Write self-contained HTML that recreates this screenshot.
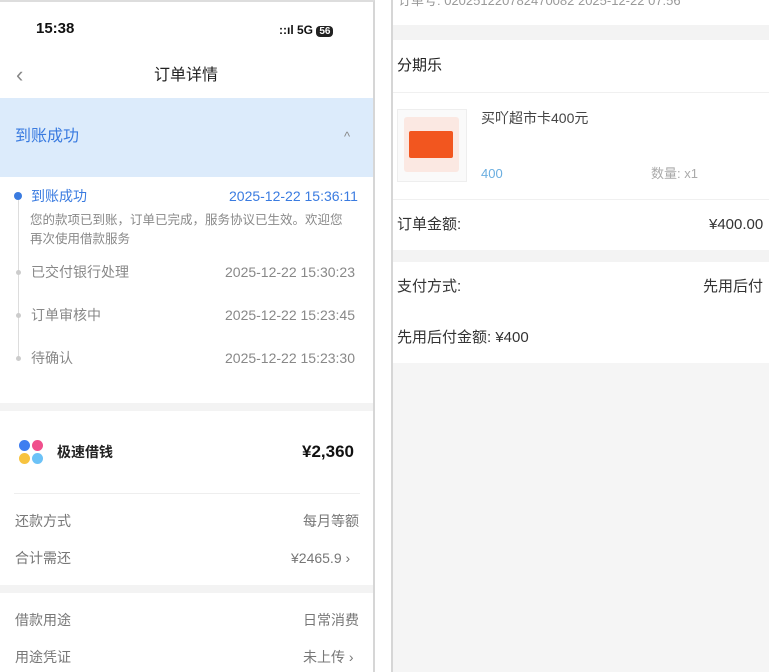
<!DOCTYPE html>
<html><head><meta charset="utf-8"><style>
*{margin:0;padding:0;box-sizing:border-box}
body{width:769px;height:672px;background:#fff;font-family:"Liberation Sans","Noto Sans CJK SC",sans-serif;position:relative;overflow:hidden;color:#333}
.a{position:absolute;white-space:nowrap;line-height:20px}
</style></head><body>
<div class="a" style="left:0;top:0;width:375px;height:672px;border-right:2px solid #d6d6d6;border-top:2px solid #ddd;background:#fff"></div>
<div class="a" style="left:36px;top:19px;font-size:15px;font-weight:bold;color:#111">15:38</div>
<div class="a" style="left:279px;top:20px;font-size:12px;font-weight:bold;color:#111">::ıl 5G <span style="background:#222;color:#fff;border-radius:4px;padding:0 3px;font-size:10px">56</span></div>
<div class="a" style="left:16px;top:65px;font-size:22px;color:#888">‹</div>
<div class="a" style="left:154px;top:66px;font-size:16px;color:#222">订单详情</div>
<div class="a" style="left:0;top:98px;width:373px;height:79px;background:#dcebfb"></div>
<div class="a" style="left:15px;top:127px;font-size:16px;color:#3a7be0">到账成功</div>
<div class="a" style="left:344px;top:127px;font-size:13px;color:#888">^</div>
<div class="a" style="left:18px;top:200px;width:1px;height:160px;background:#ddd"></div>
<div class="a" style="left:14px;top:192px;width:8px;height:8px;border-radius:50%;background:#3a7be0"></div>
<div class="a" style="left:31px;top:186px;font-size:14px;color:#3a7be0">到账成功</div>
<div class="a" style="left:229px;top:186px;font-size:14px;color:#3a7be0">2025-12-22 15:36:11</div>
<div class="a" style="left:30px;top:211px;font-size:12.5px;color:#888;line-height:19px">您的款项已到账，订单已完成，服务协议已生效。欢迎您<br>再次使用借款服务</div>
<div class="a" style="left:16px;top:270px;width:5px;height:5px;border-radius:50%;background:#ccc"></div>
<div class="a" style="left:31px;top:262px;font-size:14px;color:#888">已交付银行处理</div>
<div class="a" style="left:225px;top:262px;font-size:14px;color:#888">2025-12-22 15:30:23</div>
<div class="a" style="left:16px;top:313px;width:5px;height:5px;border-radius:50%;background:#ccc"></div>
<div class="a" style="left:31px;top:305px;font-size:14px;color:#888">订单审核中</div>
<div class="a" style="left:225px;top:305px;font-size:14px;color:#888">2025-12-22 15:23:45</div>
<div class="a" style="left:16px;top:356px;width:5px;height:5px;border-radius:50%;background:#ccc"></div>
<div class="a" style="left:31px;top:348px;font-size:14px;color:#888">待确认</div>
<div class="a" style="left:225px;top:348px;font-size:14px;color:#888">2025-12-22 15:23:30</div>
<div class="a" style="left:0;top:403px;width:373px;height:8px;background:#f3f3f3"></div>
<div class="a" style="left:19px;top:440px;width:11px;height:11px;border-radius:50%;background:#3f7ef0"></div>
<div class="a" style="left:32px;top:440px;width:11px;height:11px;border-radius:50%;background:#f04f8c"></div>
<div class="a" style="left:19px;top:453px;width:11px;height:11px;border-radius:50%;background:#f7c340"></div>
<div class="a" style="left:32px;top:453px;width:11px;height:11px;border-radius:50%;background:#6cc2f7"></div>
<div class="a" style="left:57px;top:442px;font-size:14px;font-weight:bold;color:#222">极速借钱</div>
<div class="a" style="left:302px;top:442px;font-size:17px;font-weight:bold;color:#111">¥2,360</div>
<div class="a" style="left:14px;top:493px;width:346px;height:1px;background:#eee"></div>
<div class="a" style="left:15px;top:511px;font-size:14px;color:#777">还款方式</div>
<div class="a" style="left:303px;top:511px;font-size:14px;color:#777">每月等额</div>
<div class="a" style="left:15px;top:548px;font-size:14px;color:#777">合计需还</div>
<div class="a" style="left:291px;top:548px;font-size:14px;color:#777">¥2465.9 ›</div>
<div class="a" style="left:0;top:585px;width:373px;height:8px;background:#f3f3f3"></div>
<div class="a" style="left:15px;top:610px;font-size:14px;color:#777">借款用途</div>
<div class="a" style="left:303px;top:610px;font-size:14px;color:#777">日常消费</div>
<div class="a" style="left:15px;top:647px;font-size:14px;color:#777">用途凭证</div>
<div class="a" style="left:303px;top:647px;font-size:14px;color:#777">未上传 ›</div>
<div class="a" style="left:391px;top:0;width:378px;height:672px;border-left:2px solid #d6d6d6;background:#fff"></div>
<div class="a" style="left:398px;top:-9px;font-size:13px;color:#999">订单号: 020251220782470082 2025-12-22 07:56</div>
<div class="a" style="left:393px;top:25px;width:376px;height:15px;background:#f3f3f3"></div>
<div class="a" style="left:397px;top:56px;font-size:15px;color:#222">分期乐</div>
<div class="a" style="left:393px;top:92px;width:376px;height:1px;background:#f0f0f0"></div>
<div class="a" style="left:397px;top:109px;width:70px;height:73px;border:1px solid #eee;background:#fafafa"></div>
<div class="a" style="left:404px;top:117px;width:55px;height:55px;background:#fbe8e2;border-radius:3px"></div>
<div class="a" style="left:409px;top:131px;width:44px;height:27px;background:#f2561f;border-radius:2px"></div>
<div class="a" style="left:481px;top:108px;font-size:14px;color:#444">买吖超市卡400元</div>
<div class="a" style="left:481px;top:164px;font-size:13px;color:#6aaee0">400</div>
<div class="a" style="left:651px;top:164px;font-size:13px;color:#aaa">数量: x1</div>
<div class="a" style="left:393px;top:199px;width:376px;height:1px;background:#f0f0f0"></div>
<div class="a" style="left:397px;top:215px;font-size:15px;color:#333">订单金额:</div>
<div class="a" style="left:709px;top:215px;font-size:15px;color:#333">¥400.00</div>
<div class="a" style="left:393px;top:250px;width:376px;height:12px;background:#f3f3f3"></div>
<div class="a" style="left:397px;top:277px;font-size:15px;color:#333">支付方式:</div>
<div class="a" style="left:703px;top:277px;font-size:15px;color:#333">先用后付</div>
<div class="a" style="left:397px;top:328px;font-size:15px;color:#333">先用后付金额: ¥400</div>
<div class="a" style="left:393px;top:363px;width:376px;height:309px;background:#f5f5f5"></div>
</body></html>
